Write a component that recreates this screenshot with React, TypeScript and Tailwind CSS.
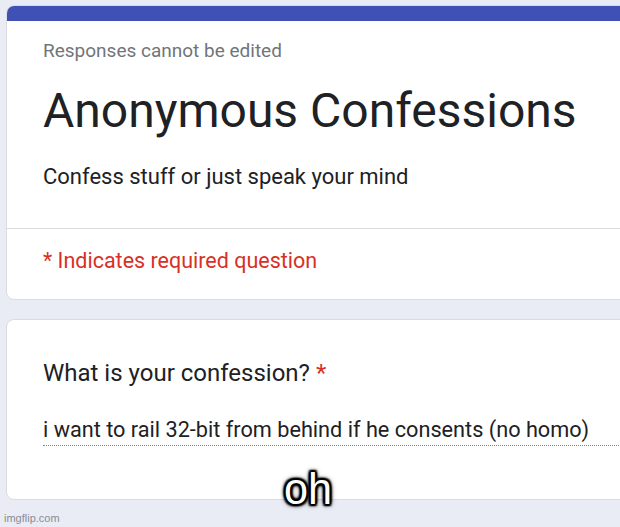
export default function App() {
  return (
    <div
      className="relative h-[527px] w-[620px] overflow-hidden bg-[#e9ebf5]"
      style={{ fontFamily: "Roboto, 'Noto Sans', sans-serif" }}
    >
      <div className="flex w-[660px] flex-col gap-[19px] pl-[6px] pt-[5px]">
        <div className="overflow-hidden rounded-[8px] border border-[#dadce0] bg-white">
          <div className="-mx-px -mt-px h-[16px] bg-[#3f51b5]" />
          <div className="px-[36px] pb-[36px] pt-[18px]">
            <div className="text-[19px] leading-[24px] text-[#70757a]">Responses cannot be edited</div>
            <h1 className="mt-[20px] text-[48px] leading-[56px] text-[#202124]">Anonymous Confessions</h1>
            <div className="mt-[23px] text-[22px] leading-[30px] text-[#202124]">
              Confess stuff or just speak your mind
            </div>
          </div>
          <div className="border-t border-[#dadce0] px-[36px] pb-[24px] pt-[18px]">
            <div className="text-[21.5px] leading-[28px] text-[#d93025]">* Indicates required question</div>
          </div>
        </div>

        <div className="rounded-[8px] border border-[#dadce0] bg-white px-[36px] pb-[53px] pt-[37px]">
          <div className="text-[24px] leading-[32px] text-[#202124]">
            What is your confession? <span className="text-[#d93025]">*</span>
          </div>
          <div className="mt-[27px] border-b border-dotted border-[#80868b] pb-px text-[21.7px] leading-[28px] text-[#202124]">
            i want to rail 32-bit from behind if he consents (no homo)
          </div>
        </div>
      </div>

      <div
        className="absolute bottom-[1px] left-[4px] text-[11px] text-[#8a8d93]"
        style={{ fontFamily: "'Liberation Sans', Arial, sans-serif" }}
      >
        imgflip.com
      </div>

      <div
        className="absolute left-[284px] top-[461px] origin-left text-[45px] leading-[56px] text-white"
        style={{
          fontFamily: "'Liberation Sans', Arial, sans-serif",
          textShadow:
            "2px 0 1px #000, -2px 0 1px #000, 0 2px 1px #000, 0 -2px 1px #000, 2px 2px 2px #000, -2px 2px 2px #000, 2px -2px 2px #000, -2px -2px 2px #000, 0 0 5px #000, 0 0 6px rgba(0,0,0,0.7)",
          transform: "scaleX(0.96)",
        }}
      >
        oh
      </div>
    </div>
  );
}
